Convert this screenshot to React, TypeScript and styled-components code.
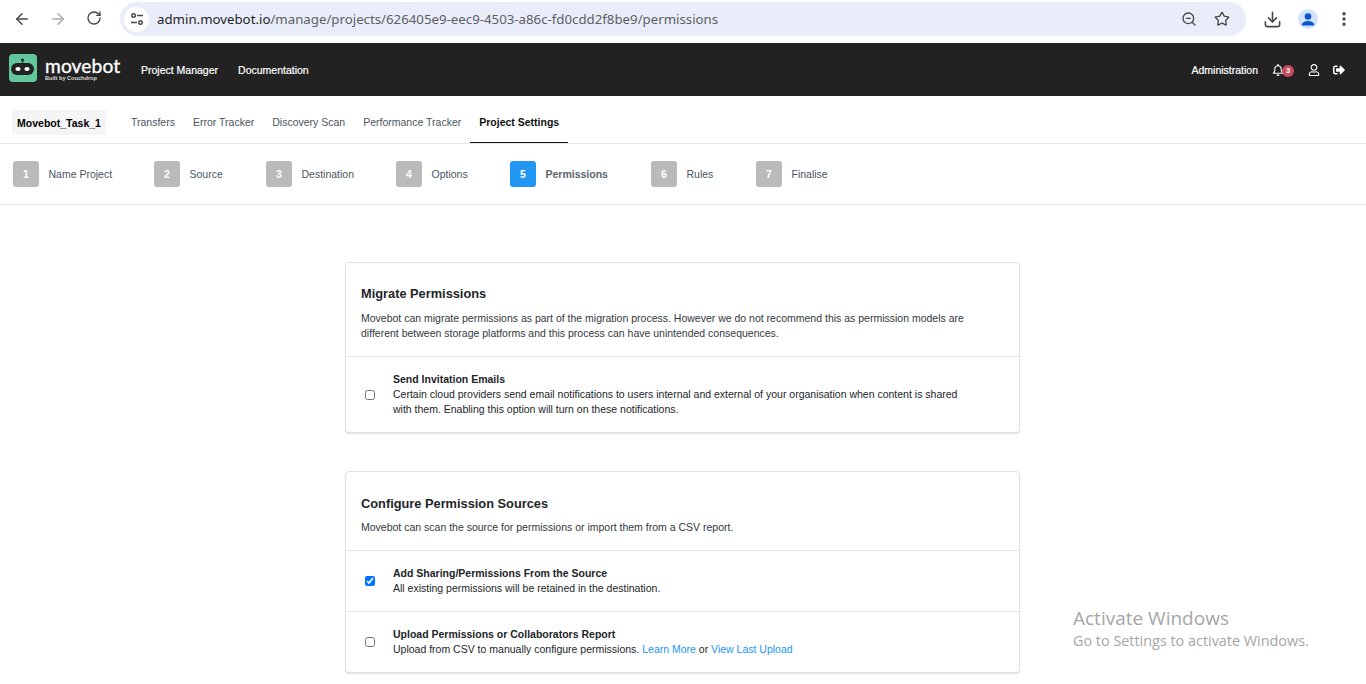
import React from 'react'
import styled, { createGlobalStyle } from 'styled-components'
import { ArrowLeft, ArrowRight, RotateCw, ZoomOut, Star, Download, EllipsisVertical } from 'lucide-react'
import { FaRegBell, FaRegUser, FaSignOutAlt } from 'react-icons/fa'

const GlobalStyle = createGlobalStyle`
  html, body {
    margin: 0;
    padding: 0;
    height: 100%;
    overflow: hidden;
    background: #fff;
    font-family: "Liberation Sans", Arial, sans-serif;
    font-size: 12px;
    color: #212529;
  }
  * { box-sizing: border-box; }
`

const Page = styled.div`
  position: relative;
  width: 1366px;
  height: 684px;
  overflow: hidden;
`

const BrowserBar = styled.div`
  height: 43px;
  display: flex;
  align-items: flex-start;
  padding: 2px 0 0 12px;
  color: #474747;
`

const NavIcons = styled.div`
  display: flex;
  gap: 16px;
  padding: 8px 0 0;
  width: 108px;
  flex: none;
`

const NavIcon = styled.span<{ $muted?: boolean }>`
  display: flex;
  width: 20px;
  justify-content: center;
  color: ${(p) => (p.$muted ? '#a9abae' : '#474747')};
`

const Omnibox = styled.div`
  width: 1126px;
  height: 34px;
  background: #e9edf9;
  border-radius: 17px;
  display: flex;
  align-items: center;
  padding: 0 16px 0 4px;
`

const SiteInfo = styled.span`
  width: 25px;
  height: 25px;
  border-radius: 50%;
  background: #fff;
  display: flex;
  align-items: center;
  justify-content: center;
  margin-right: 8px;
  flex: none;
`

const Url = styled.div`
  flex: 1;
  font-family: "Noto Sans", sans-serif;
  font-size: 13.26px;
  color: #5c5f62;
  white-space: nowrap;
  b {
    font-weight: 400;
    color: #1f1f1f;
  }
`

const OmniIcons = styled.div`
  display: flex;
  gap: 17px;
  align-items: center;
  color: #474747;
`

const BrowserRight = styled.div`
  display: flex;
  align-items: center;
  height: 34px;
  margin-left: 17px;
  color: #474747;
`

const Avatar = styled.span`
  width: 20px;
  height: 20px;
  margin: 0 17px 0 16px;
  border-radius: 50%;
  background: #d3e3fd;
  overflow: hidden;
  display: flex;
`

const Header = styled.header`
  height: 53px;
  background: #222;
  display: flex;
  align-items: center;
  padding: 0 21px 0 9px;
  color: #fff;
  font-size: 10.5px;
`

const Logo = styled.div`
  display: flex;
  align-self: flex-start;
  margin-top: 11px;
  width: 132px;
  flex: none;
`

const LogoMark = styled.svg`
  width: 28px;
  height: 28px;
  flex: none;
`

const LogoText = styled.div`
  margin: 4px 0 0 8px;
  display: flex;
  flex-direction: column;
  line-height: 1;
`

const LogoName = styled.span`
  font-family: "Lato", sans-serif;
  font-size: 19.2px;
  font-weight: 400;
  -webkit-text-stroke: 0.35px #fff;
  letter-spacing: 0.1px;
  line-height: 15px;
`

const LogoSub = styled.span`
  font-size: 5.6px;
  font-weight: 700;
  color: #ddd;
  margin-top: 3px;
  white-space: nowrap;
`

const HeaderLink = styled.a<{ $gap: number }>`
  margin-right: ${(p) => p.$gap}px;
  font-weight: 400;
  -webkit-text-stroke: 0.2px #fff;
  color: #fff;
  white-space: nowrap;
`

const HeaderSpacer = styled.div`
  flex: 1;
`

const HeaderIcons = styled.div`
  display: flex;
  align-items: center;
`

const BellWrap = styled.span`
  position: relative;
  display: flex;
  margin-right: 24px;
`

const Badge = styled.span`
  position: absolute;
  left: 10px;
  top: 1px;
  width: 12px;
  height: 12px;
  border-radius: 50%;
  background: #c94a5c;
  color: #fff;
  font-size: 7.5px;
  font-weight: 700;
  line-height: 12px;
  text-align: center;
`

const LogoutWrap = styled.span`
  display: flex;
  margin-left: 13px;
`

const TabsRow = styled.nav`
  height: 48px;
  border-bottom: 1px solid #e8e8e8;
  display: flex;
  align-items: stretch;
  padding-left: 12px;
`

const ProjectName = styled.div`
  align-self: flex-start;
  margin: 14px 16px 0 0;
  height: 25px;
  width: 94px;
  background: #f5f5f5;
  display: flex;
  align-items: center;
  justify-content: center;
  font-size: 10.5px;
  font-weight: 700;
  color: #000;
  white-space: nowrap;
`

const Tab = styled.a<{ $active?: boolean }>`
  display: flex;
  align-items: center;
  padding: 5px 9px 0;
  height: 47px;
  font-size: 10.5px;
  font-weight: ${(p) => (p.$active ? 700 : 400)};
  color: ${(p) => (p.$active ? '#111' : '#4a5560')};
  border-bottom: ${(p) => (p.$active ? '1px solid #111' : '1px solid transparent')};
  white-space: nowrap;
`

const StepsRow = styled.div`
  height: 61px;
  border-bottom: 1px solid #e8e8e8;
  display: flex;
  align-items: center;
  padding-left: 13px;
`

const Step = styled.div<{ $width: number }>`
  width: ${(p) => p.$width}px;
  display: flex;
  align-items: center;
  flex: none;
`

const StepNumber = styled.span<{ $active?: boolean }>`
  width: 26px;
  height: 26px;
  border-radius: 3px;
  background: ${(p) => (p.$active ? '#2196f3' : '#bababa')};
  color: #fff;
  font-size: 10.5px;
  font-weight: 700;
  display: flex;
  align-items: center;
  justify-content: center;
  margin-right: 9.5px;
`

const StepLabel = styled.span<{ $active?: boolean }>`
  font-size: 10.5px;
  font-weight: ${(p) => (p.$active ? 700 : 400)};
  color: ${(p) => (p.$active ? '#5a6570' : '#4a5560')};
`

const Content = styled.main`
  display: flex;
  flex-direction: column;
  align-items: center;
  padding: 57px 1px 0 0;
  gap: 38px;
`

const Card = styled.section`
  width: 675px;
  margin-left: -1px;
  border: 1px solid #e2e2e2;
  border-radius: 4px;
  box-shadow: 0 1px 1px rgba(0, 0, 0, 0.12);
  background: #fff;
  flex: none;
`

const CardHead = styled.div<{ $top: number }>`
  padding: ${(p) => p.$top}px 15px 15px 15.5px;
`

const CardTitle = styled.h2<{ $gap: number }>`
  margin: 0 0 ${(p) => p.$gap}px;
  font-size: 12.8px;
  line-height: 17px;
  font-weight: 700;
  color: #212529;
`

const CardText = styled.p`
  margin: 0;
  font-size: 10.5px;
  line-height: 15px;
  color: #33383d;
`

const OptionRow = styled.label<{ $height: number }>`
  display: flex;
  align-items: center;
  height: ${(p) => p.$height}px;
  border-top: 1px solid #e6e6e6;
  padding-left: 19px;
`

const CheckBox = styled.input`
  width: 10px;
  height: 10px;
  margin: 0 18.5px 0 0;
  flex: none;
  accent-color: #0075ff;
`

const OptionBody = styled.div`
  width: 580px;
  font-size: 10.5px;
  line-height: 15px;
  color: #212529;
`

const OptionTitle = styled.div`
  font-weight: 700;
`

const TextLink = styled.a`
  color: #2196f3;
`

const Watermark = styled.div`
  position: absolute;
  left: 1073px;
  top: 606px;
  color: #a6a6a6;
  font-family: "Open Sans", sans-serif;
  pointer-events: none;
`

const WatermarkTitle = styled.div`
  font-size: 19px;
  line-height: 25px;
`

const WatermarkSub = styled.div`
  font-size: 14.4px;
  line-height: 19px;
`

const tabs = ['Transfers', 'Error Tracker', 'Discovery Scan', 'Performance Tracker']

const steps = [
  { n: 1, label: 'Name Project', width: 141 },
  { n: 2, label: 'Source', width: 112 },
  { n: 3, label: 'Destination', width: 130 },
  { n: 4, label: 'Options', width: 114 },
  { n: 5, label: 'Permissions', width: 141, active: true },
  { n: 6, label: 'Rules', width: 105 },
  { n: 7, label: 'Finalise', width: 100 }
]

const App: React.FC = () => {
  return (
    <Page>
      <GlobalStyle />
      <BrowserBar>
        <NavIcons>
          <NavIcon><ArrowLeft size={18} /></NavIcon>
          <NavIcon $muted><ArrowRight size={18} /></NavIcon>
          <NavIcon><RotateCw size={16} /></NavIcon>
        </NavIcons>
        <Omnibox>
          <SiteInfo>
            <svg width="16" height="16" viewBox="0 0 16 16" fill="none" stroke="#474747" strokeWidth="1.4">
              <circle cx="4.5" cy="4.5" r="1.8" />
              <path d="M8 4.5h6M2 11.5h6" />
              <circle cx="11.5" cy="11.5" r="1.8" />
            </svg>
          </SiteInfo>
          <Url><b>admin.movebot.io</b>/manage/projects/626405e9-eec9-4503-a86c-fd0cdd2f8be9/permissions</Url>
          <OmniIcons>
            <ZoomOut size={16} />
            <Star size={16} />
          </OmniIcons>
        </Omnibox>
        <BrowserRight>
          <Download size={19} />
          <Avatar>
            <svg width="20" height="20" viewBox="0 0 20 20" fill="#0b57d0">
              <circle cx="10" cy="7.5" r="3.3" />
              <path d="M3.8 16c0-2.8 3.6-4 6.2-4s6.2 1.2 6.2 4v.5H3.8z" />
            </svg>
          </Avatar>
          <EllipsisVertical size={18} strokeWidth={2.5} />
        </BrowserRight>
      </BrowserBar>

      <Header>
        <Logo>
          <LogoMark viewBox="0 0 28 28">
            <rect width="28" height="28" rx="4" fill="#62c79b" />
            <circle cx="13.5" cy="6" r="1.5" fill="#222" />
            <path d="M13 6h1v4h-1z" fill="#222" />
            <rect x="2" y="9" width="23" height="12" rx="6" fill="#222" />
            <ellipse cx="9" cy="15" rx="2.6" ry="2" fill="#fff" />
            <ellipse cx="18" cy="15" rx="2.6" ry="2" fill="#fff" />
          </LogoMark>
          <LogoText>
            <LogoName>movebot</LogoName>
            <LogoSub>Built by Couchdrop</LogoSub>
          </LogoText>
        </Logo>
        <HeaderLink $gap={20}>Project Manager</HeaderLink>
        <HeaderLink $gap={20}>Documentation</HeaderLink>
        <HeaderSpacer />
        <HeaderLink $gap={14}>Administration</HeaderLink>
        <HeaderIcons>
          <BellWrap>
            <FaRegBell size={12} />
            <Badge>3</Badge>
          </BellWrap>
          <FaRegUser size={12} />
          <LogoutWrap>
            <FaSignOutAlt size={12} />
          </LogoutWrap>
        </HeaderIcons>
      </Header>

      <TabsRow>
        <ProjectName>Movebot_Task_1</ProjectName>
        {tabs.map((tab) => (
          <Tab key={tab}>{tab}</Tab>
        ))}
        <Tab $active>Project Settings</Tab>
      </TabsRow>

      <StepsRow>
        {steps.map((step) => (
          <Step key={step.n} $width={step.width}>
            <StepNumber $active={step.active}>{step.n}</StepNumber>
            <StepLabel $active={step.active}>{step.label}</StepLabel>
          </Step>
        ))}
      </StepsRow>

      <Content>
        <Card>
          <CardHead $top={22}>
            <CardTitle $gap={9}>Migrate Permissions</CardTitle>
            <CardText>
              Movebot can migrate permissions as part of the migration process. However we do not recommend this as permission models are
              <br />
              different between storage platforms and this process can have unintended consequences.
            </CardText>
          </CardHead>
          <OptionRow $height={76}>
            <CheckBox type="checkbox" />
            <OptionBody>
              <OptionTitle>Send Invitation Emails</OptionTitle>
              Certain cloud providers send email notifications to users internal and external of your organisation when content is shared with them. Enabling this option will turn on these notifications.
            </OptionBody>
          </OptionRow>
        </Card>

        <Card>
          <CardHead $top={23}>
            <CardTitle $gap={8}>Configure Permission Sources</CardTitle>
            <CardText>Movebot can scan the source for permissions or import them from a CSV report.</CardText>
          </CardHead>
          <OptionRow $height={61}>
            <CheckBox type="checkbox" defaultChecked />
            <OptionBody>
              <OptionTitle>Add Sharing/Permissions From the Source</OptionTitle>
              All existing permissions will be retained in the destination.
            </OptionBody>
          </OptionRow>
          <OptionRow $height={61}>
            <CheckBox type="checkbox" />
            <OptionBody>
              <OptionTitle>Upload Permissions or Collaborators Report</OptionTitle>
              Upload from CSV to manually configure permissions. <TextLink>Learn More</TextLink> or <TextLink>View Last Upload</TextLink>
            </OptionBody>
          </OptionRow>
        </Card>
      </Content>

      <Watermark>
        <WatermarkTitle>Activate Windows</WatermarkTitle>
        <WatermarkSub>Go to Settings to activate Windows.</WatermarkSub>
      </Watermark>
    </Page>
  )
}

export default App
